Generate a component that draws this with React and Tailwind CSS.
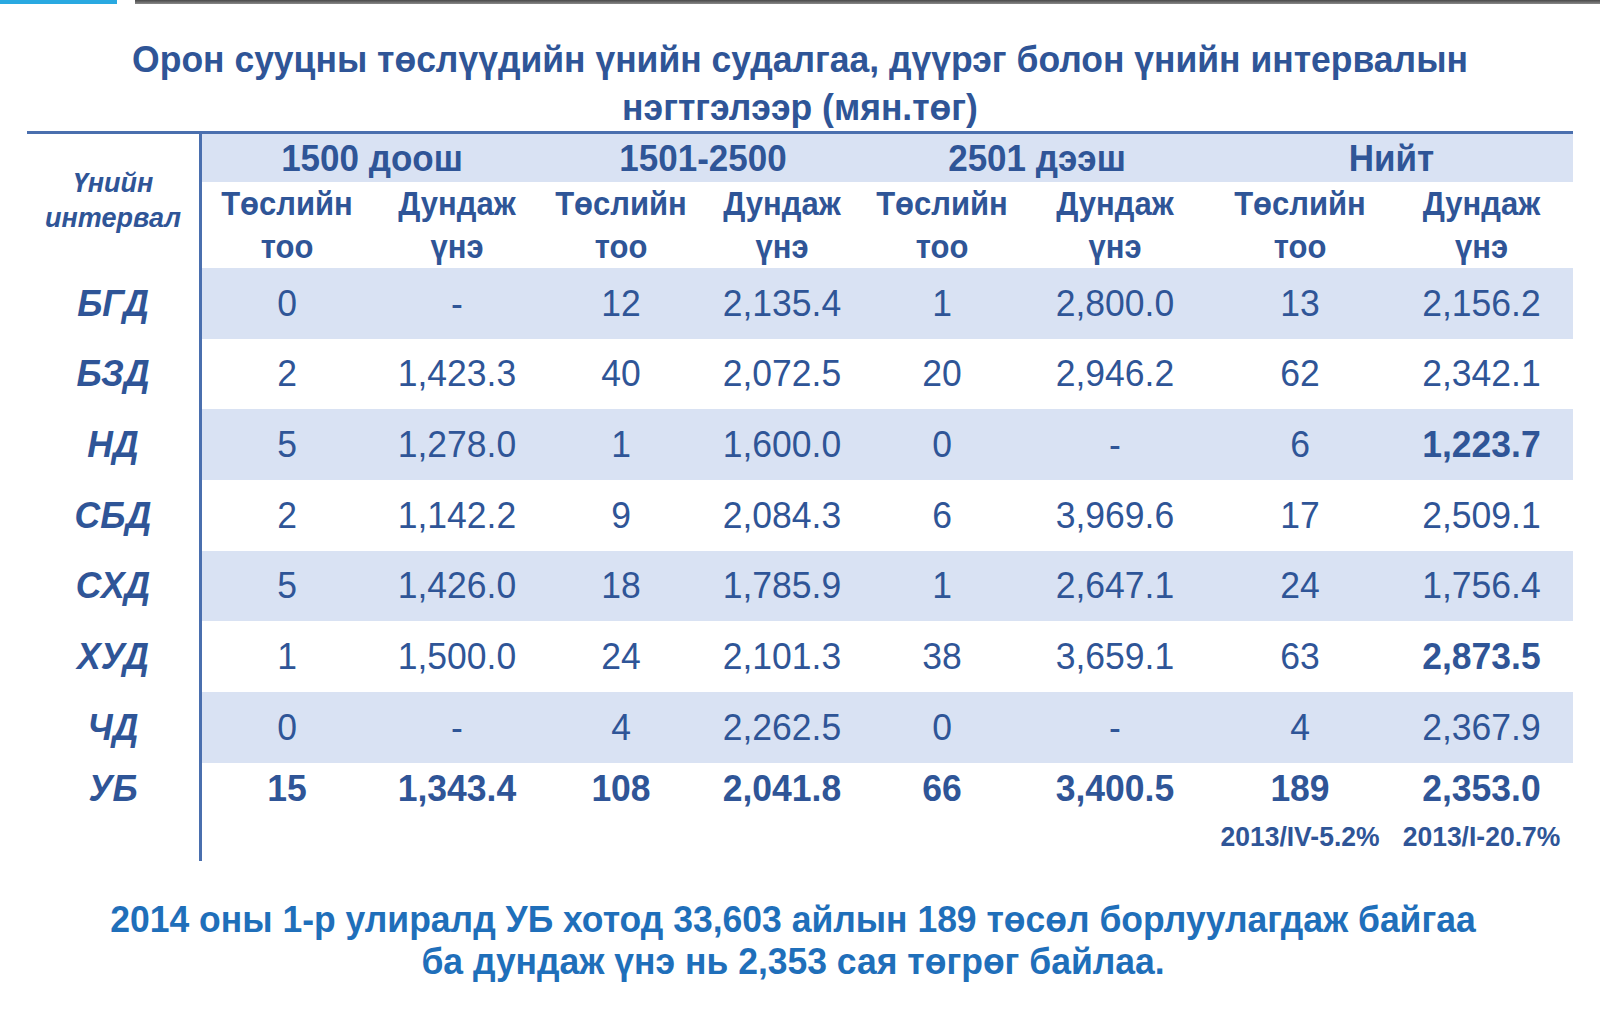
import React from "react";

const S = ({ children, className = "" }) => (
  <span className={"inline-block scale-y-105 " + className}>{children}</span>
);

const colW = ["w-[170px]", "w-[170px]", "w-[158px]", "w-[164px]", "w-[156px]", "w-[190px]", "w-[180px]", "w-[183px]"];

const rows = [
  { label: "БГД", band: true, vals: ["0", "-", "12", "2,135.4", "1", "2,800.0", "13", "2,156.2"] },
  { label: "БЗД", band: false, vals: ["2", "1,423.3", "40", "2,072.5", "20", "2,946.2", "62", "2,342.1"] },
  { label: "НД", band: true, vals: ["5", "1,278.0", "1", "1,600.0", "0", "-", "6", "1,223.7"], bold: [7] },
  { label: "СБД", band: false, vals: ["2", "1,142.2", "9", "2,084.3", "6", "3,969.6", "17", "2,509.1"] },
  { label: "СХД", band: true, vals: ["5", "1,426.0", "18", "1,785.9", "1", "2,647.1", "24", "1,756.4"] },
  { label: "ХУД", band: false, vals: ["1", "1,500.0", "24", "2,101.3", "38", "3,659.1", "63", "2,873.5"], bold: [7] },
  { label: "ЧД", band: true, vals: ["0", "-", "4", "2,262.5", "0", "-", "4", "2,367.9"] },
];

const ub = ["15", "1,343.4", "108", "2,041.8", "66", "3,400.5", "189", "2,353.0"];

export default function App() {
  return (
    <div className="w-[1600px] h-[1021px] bg-white overflow-hidden font-['Liberation_Sans',Arial,sans-serif] text-[#2f5597]">
      {/* top bar */}
      <div className="flex h-[4px]">
        <div className="w-[117px] bg-[#29a9e1]" />
        <div className="w-[18px]" />
        <div className="flex-1 bg-gradient-to-b from-[#4a4a4a] to-[#8a8a8a]" />
      </div>

      {/* title */}
      <div className="mt-[31px] text-center font-bold text-[35.5px] leading-[48px] text-[#2f5597] whitespace-nowrap">
        <div><S>Орон сууцны төслүүдийн үнийн судалгаа, дүүрэг болон үнийн интервалын</S></div>
        <div><S>нэгтгэлээр (мян.төг)</S></div>
      </div>

      {/* table */}
      <div className="ml-[27px] w-[1546px] border-t-[3px] border-[#4a6fae] flex">
        {/* label column */}
        <div className="w-[172px] flex flex-col">
          <div className="h-[134px] flex flex-col items-center justify-center font-bold italic text-[27px] leading-[35px]">
            <S>Үнийн</S>
            <S>интервал</S>
          </div>
          {rows.map((r) => (
            <div key={r.label} className="h-[70.7px] flex items-center justify-center font-bold italic text-[35.5px]">
              <S>{r.label}</S>
            </div>
          ))}
          <div className="h-[52px] flex items-center justify-center font-bold italic text-[35.5px]">
            <S>УБ</S>
          </div>
        </div>

        {/* data area */}
        <div className="w-[1374px] h-[727px] border-l-[3px] border-[#4a6fae] flex flex-col">
          <div className="h-[48px] bg-[#d9e2f3] flex font-bold text-[35px]">
            <div className="w-[340px] flex items-center justify-center"><S>1500 доош</S></div>
            <div className="w-[322px] flex items-center justify-center"><S>1501-2500</S></div>
            <div className="w-[346px] flex items-center justify-center"><S>2501 дээш</S></div>
            <div className="w-[363px] flex items-center justify-center"><S>Нийт</S></div>
          </div>
          <div className="h-[86px] flex font-bold text-[31px] leading-[43px]">
            {colW.map((w, i) => (
              <div key={i} className={w + " flex flex-col items-center justify-center"}>
                <S>{i % 2 === 0 ? "Төслийн" : "Дундаж"}</S>
                <S>{i % 2 === 0 ? "тоо" : "үнэ"}</S>
              </div>
            ))}
          </div>
          {rows.map((r) => (
            <div key={r.label} className={"h-[70.7px] flex text-[35.5px] " + (r.band ? "bg-[#d9e2f3]" : "bg-white")}>
              {r.vals.map((v, i) => (
                <div
                  key={i}
                  className={colW[i] + " flex items-center justify-center " + (r.bold && r.bold.includes(i) ? "font-bold" : "font-normal")}
                >
                  <S>{v}</S>
                </div>
              ))}
            </div>
          ))}
          <div className="h-[52px] flex text-[35.5px] font-bold">
            {ub.map((v, i) => (
              <div key={i} className={colW[i] + " flex items-center justify-center"}>
                <S>{v}</S>
              </div>
            ))}
          </div>
          <div className="h-[46px] flex text-[26.5px] font-bold">
            <div className="w-[1008px]" />
            <div className="w-[180px] flex items-center justify-center whitespace-nowrap"><S>2013/IV-5.2%</S></div>
            <div className="w-[183px] flex items-center justify-center whitespace-nowrap"><S>2013/I-20.7%</S></div>
          </div>
        </div>
      </div>

      {/* footer */}
      <div className="mt-[37px] pr-[14px] text-center font-bold text-[35.5px] leading-[42px] text-[#1f6fba] whitespace-nowrap">
        <div><S>2014 оны 1-р улиралд УБ хотод 33,603 айлын 189 төсөл борлуулагдаж байгаа</S></div>
        <div><S>ба дундаж үнэ нь 2,353 сая төгрөг байлаа.</S></div>
      </div>
    </div>
  );
}
